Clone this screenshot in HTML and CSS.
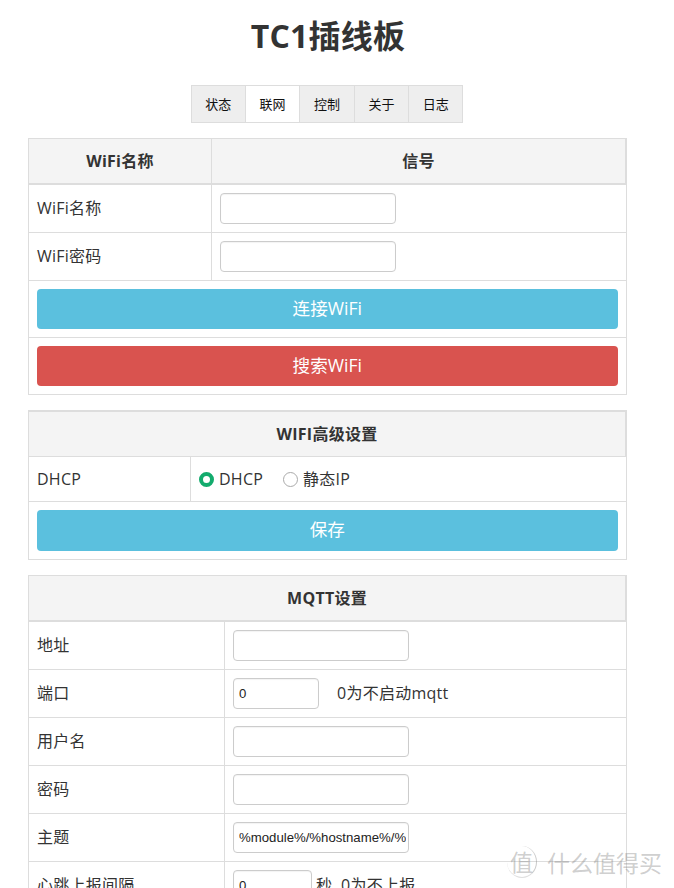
FILE: index.html
```html
<!DOCTYPE html>
<html lang="zh">
<head>
<meta charset="utf-8">
<title>TC1插线板</title>
<link rel="stylesheet" href="styles.css">
</head>
<body>
<main class="page">
  <h1 class="title">TC1插线板</h1>
  <nav class="tabs">
    <a class="tab">状态</a>
    <a class="tab active">联网</a>
    <a class="tab">控制</a>
    <a class="tab">关于</a>
    <a class="tab">日志</a>
  </nav>

  <table class="panel wifi">
    <colgroup><col class="c-wifi"><col></colgroup>
    <tr class="head"><th>WiFi名称</th><th>信号</th></tr>
    <tr><td>WiFi名称</td><td><input class="field" type="text"></td></tr>
    <tr><td>WiFi密码</td><td><input class="field" type="password"></td></tr>
    <tr><td colspan="2"><button class="btn info">连接WiFi</button></td></tr>
    <tr><td colspan="2"><button class="btn danger">搜索WiFi</button></td></tr>
  </table>

  <table class="panel adv">
    <colgroup><col class="c-adv"><col></colgroup>
    <tr class="head"><th colspan="2">WIFI高级设置</th></tr>
    <tr class="radio-row"><td>DHCP</td><td>
      <div class="radios">
        <label class="radio"><span class="dot on"></span>DHCP</label>
        <label class="radio"><span class="dot"></span>静态IP</label>
      </div>
    </td></tr>
    <tr><td colspan="2"><button class="btn info tall">保存</button></td></tr>
  </table>

  <table class="panel mqtt">
    <colgroup><col class="c-mqtt"><col></colgroup>
    <tr class="head"><th colspan="2">MQTT设置</th></tr>
    <tr><td>地址</td><td><input class="field" type="text"></td></tr>
    <tr><td>端口</td><td><div class="inline wide-gap"><input class="field short" type="text" value="0"><span>0为不启动mqtt</span></div></td></tr>
    <tr><td>用户名</td><td><input class="field" type="text"></td></tr>
    <tr><td>密码</td><td><input class="field" type="password"></td></tr>
    <tr><td>主题</td><td><input class="field" type="text" value="%module%/%hostname%/%"></td></tr>
    <tr><td>心跳上报间隔</td><td><div class="inline"><input class="field shorter" type="text" value="0"><span>秒, 0为不上报</span></div></td></tr>
  </table>
</main>

<div class="watermark" aria-hidden="true"><span class="wm-badge">值</span><span>什么值得买</span></div>
</body>
</html>
```

FILE: styles.css
```css
* { box-sizing: border-box; }

html, body {
  height: 100%;
  overflow: hidden;
}

body {
  margin: 0;
  background: #fff;
  color: #333;
  font-family: "Open Sans", "Noto Sans CJK SC", sans-serif;
  font-size: 16px;
  line-height: 1.5;
  letter-spacing: .25px;
}

.page {
  width: 600px;
  margin-left: 28px;
}

.title {
  margin: 0;
  padding-top: 14px;
  height: 85px;
  font-size: 32px;
  font-weight: 700;
  line-height: 44px;
  text-align: center;
}

.tabs {
  display: flex;
  justify-content: center;
  height: 38px;
  margin-bottom: 15px;
  padding-right: 1px;
}

.tab {
  width: 55.4px;
  margin-left: -1px;
  border: 1px solid #ddd;
  background: #eee;
  color: #111;
  font-size: 13px;
  letter-spacing: 0;
  line-height: 36px;
  text-align: center;
}

.tab.active { background: #fff; }

.panel {
  width: 599px;
  margin-bottom: 15px;
  border-collapse: collapse;
  table-layout: fixed;
}

.c-wifi { width: 183px; }
.c-adv { width: 162px; }
.c-mqtt { width: 196px; }

th, td {
  border: 1px solid #ddd;
  padding: 8px;
}

.panel td { height: 48px; }
.panel th { height: 45px; }

th {
  background: #f4f4f4;
  font-weight: 700;
  text-align: center;
  border-bottom-width: 2px;
}

th:last-child { border-right-width: 2px; }

.adv th {
  height: 46px;
  border-top-width: 2px;
  border-bottom-width: 1px;
}

.panel .radio-row td { height: 45px; padding-top: 0; padding-bottom: 0; }

.field {
  display: block;
  width: 176px;
  height: 31px;
  padding: 4px 2px 4px 5px;
  border: 1px solid #ccc;
  border-radius: 4px;
  background: #fff;
  color: #222;
  font-family: "Liberation Sans", sans-serif;
  font-size: 13.2px;
  letter-spacing: 0;
  box-shadow: inset 0 1px 1px rgba(0, 0, 0, .05);
}

.field.short { width: 86px; }
.field.shorter { width: 79px; }

.inline {
  display: flex;
  align-items: center;
  gap: 4px;
}

.inline.wide-gap { gap: 18px; }

.btn {
  display: block;
  width: 100%;
  height: 40px;
  padding: 0 0 2px;
  border: 0;
  border-radius: 4px;
  color: #fff;
  font-family: inherit;
  font-size: 17.6px;
}

.btn.tall { height: 41px; padding-bottom: 4px; }
.btn.info { background: #5bc0de; }
.btn.danger { background: #d9534f; }

.radios {
  display: flex;
  gap: 20px;
}

.radio {
  display: flex;
  align-items: center;
  gap: 5px;
}

.dot {
  width: 15px;
  height: 15px;
  border: 1px solid #aaa;
  border-radius: 50%;
  background: #fff;
}

.dot.on {
  border: 4px solid #13ab6d;
}

.watermark {
  position: absolute;
  left: 507px;
  top: 846px;
  display: flex;
  align-items: center;
  gap: 10px;
  color: rgba(130, 130, 130, .4);
  font-family: "Noto Sans CJK SC", sans-serif;
  font-size: 23px;
  letter-spacing: 0;
  line-height: 30px;
}

.wm-badge {
  width: 30px;
  height: 32px;
  border-right: 1px solid rgba(150, 150, 150, .5);
  border-bottom: 1px solid rgba(150, 150, 150, .3);
  border-radius: 50%;
  text-align: center;
}
```
